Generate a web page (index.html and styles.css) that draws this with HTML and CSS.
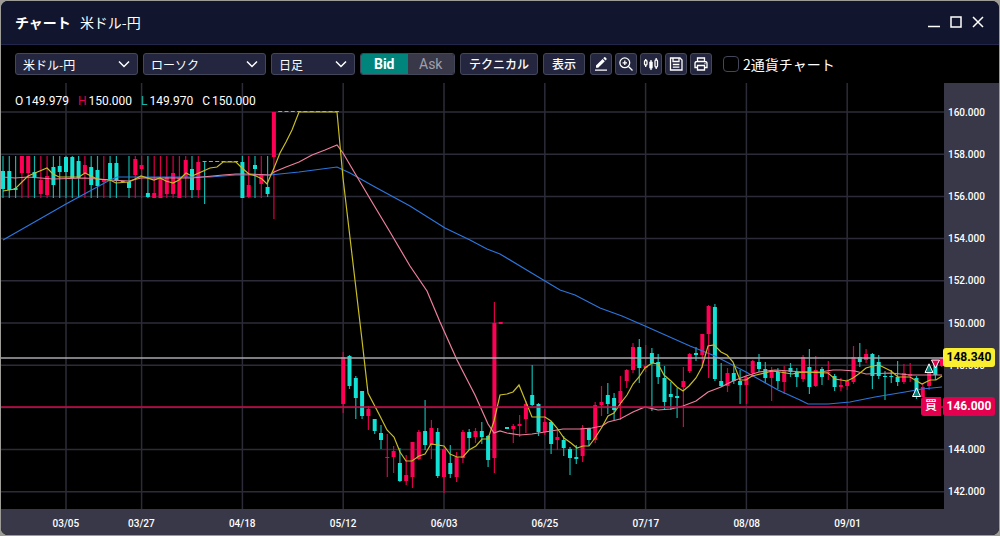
FILE: index.html
```html
<!doctype html>
<html lang="ja">
<head>
	<meta charset="utf-8">
	<title>チャート 米ドル-円</title>
	<link rel="stylesheet" href="styles.css">
</head>
<body>
<div class="window">
	<header class="titlebar">
		<h1 class="title">チャート</h1>
		<span class="pair">米ドル-円</span>
		<div class="win-controls">
			<button type="button" aria-label="最小化"><svg viewBox="0 0 12 12"><path d="M0 10.5h12"/></svg></button>
			<button type="button" aria-label="最大化"><svg viewBox="0 0 12 12"><path d="M1 1h10v10H1z"/></svg></button>
			<button type="button" aria-label="閉じる"><svg viewBox="0 0 12 12"><path d="M1 1l10 10M11 1L1 11"/></svg></button>
		</div>
	</header>

	<div class="toolbar">
		<div class="select">
			<select aria-label="通貨ペア"><option>米ドル-円</option></select>
			<svg viewBox="0 0 12 12"><path d="M1 3.5l5 5 5-5"/></svg>
		</div>
		<div class="select">
			<select aria-label="チャート種類"><option>ローソク</option></select>
			<svg viewBox="0 0 12 12"><path d="M1 3.5l5 5 5-5"/></svg>
		</div>
		<div class="select select-short">
			<select aria-label="足種"><option>日足</option></select>
			<svg viewBox="0 0 12 12"><path d="M1 3.5l5 5 5-5"/></svg>
		</div>
		<div class="toggle">
			<button type="button" class="cur">Bid</button>
			<button type="button">Ask</button>
		</div>
		<button type="button" class="btn">テクニカル</button>
		<button type="button" class="btn">表示</button>
		<div class="icons">
			<button type="button" class="icon" aria-label="描画">
				<svg viewBox="0 0 16 16"><path class="fill" d="M3 9.6L9.6 3l2.2 2.2L5.2 11.8H3zM10.3 2.3l1-1q.5-.4 1 0l1.200 1.200q.4.500 0 1l-1 1z"/><path d="M2 14.200h12"/></svg>
			</button>
			<button type="button" class="icon" aria-label="拡大">
				<svg viewBox="0 0 16 16"><circle cx="6.800" cy="6.800" r="4.900"/><path d="M10.500 10.500L14.500 14.500M4.600 6.800h4.400M6.800 4.600V9"/></svg>
			</button>
			<button type="button" class="icon" aria-label="ローソク足">
				<svg viewBox="0 0 16 16"><rect x="1.500" y="4.500" width="2.500" height="4.500" rx="1"/><path d="M2.700 3v1.500M2.700 9v2M8 4v10M13.200 2v2M13.200 11v2"/><rect class="fill" x="6.300" y="5.500" width="3.400" height="7" rx="1"/><rect x="12" y="4" width="2.500" height="7" rx="1"/></svg>
			</button>
			<button type="button" class="icon" aria-label="保存">
				<svg viewBox="0 0 16 16"><path d="M2.500 2h9.500l2 2v10H2.500zM5 2v3.500h6V2M4.800 8.500h6.600M4.800 11.200h6.600"/></svg>
			</button>
			<button type="button" class="icon" aria-label="印刷">
				<svg viewBox="0 0 16 16"><path d="M4.500 5.500V2h7v3.500M4.500 11.500H2v-4q0-2 2-2h8q2 0 2 2v4h-2.500M4.500 9.500h7V14h-7z"/><path d="M11.500 7.500h1"/></svg>
			</button>
		</div>
		<label class="check"><input type="checkbox">2通貨チャート</label>
	</div>

	<main class="chart">
		<div class="plot">
			<svg id="plot" viewBox="1 83 943 426" preserveAspectRatio="none" role="img" aria-label="米ドル-円 日足チャート">
				<g id="grid" class="grid"></g>
				<g id="candles"></g>
				<polyline id="ma-long" class="ma ma-long"/>
				<polyline id="ma-mid" class="ma ma-mid"/>
				<polyline id="ma-short" class="ma ma-short"/>
				<path class="line-now" d="M1 358H944"/>
				<path class="line-order" d="M1 407H944"/>
				<path class="mark buy" d="M929 364l4 8.500h-8z"/>
				<path class="mark buy" d="M916.500 388l4 8.500h-8z"/>
				<path class="mark sell" d="M935.500 368l-4-8h8z"/>
			</svg>
			<ul class="ohlc">
				<li><span>O</span>149.979</li>
				<li><span class="high">H</span>150.000</li>
				<li><span class="low">L</span>149.970</li>
				<li><span>C</span>150.000</li>
			</ul>
		</div>
		<ul class="prices">
			<li>160.000</li>
			<li>158.000</li>
			<li>156.000</li>
			<li>154.000</li>
			<li>152.000</li>
			<li>150.000</li>
			<li>148.000</li>
			<li></li>
			<li>144.000</li>
			<li>142.000</li>
		</ul>
		<ul class="dates">
			<li>03/05</li>
			<li>03/27</li>
			<li>04/18</li>
			<li>05/12</li>
			<li>06/03</li>
			<li>06/25</li>
			<li>07/17</li>
			<li>08/08</li>
			<li>09/01</li>
		</ul>
		<div class="tag tag-now"><b>148.340</b></div>
		<div class="tag tag-order"><span>買</span><b>146.000</b></div>
	</main>
</div>
<script src="chart.js"></script>
</body>
</html>
```

FILE: styles.css
```css
*{box-sizing:border-box;margin:0;padding:0;}
body{padding:1px;background:#9d9c96;color:#fff;font-family:"Noto Sans CJK JP",sans-serif;font-size:12px;}
ul{list-style:none;}
button,select{font:inherit;color:inherit;cursor:pointer;}
svg{display:block;fill:none;stroke:#fff;stroke-width:1.5;}

.window{display:flex;flex-direction:column;height:calc(100vh - 2px);min-height:360px;background:#000;border-radius:7px;overflow:hidden;}

.titlebar{display:flex;align-items:center;gap:9px;height:44px;padding:0 15px 2px 14px;background:#11152d;border-bottom:1px solid #23264a;font-size:14px;}
.title{font-size:14px;font-weight:700;}
.win-controls{display:flex;gap:10px;margin-left:auto;}
.win-controls button{width:12px;height:12px;border:0;background:none;}

.toolbar{display:flex;align-items:center;gap:5px;height:38px;padding:0 14px;white-space:nowrap;}
.select{display:grid;align-items:center;width:123px;}
.select-short{width:84px;}
.select select,.select svg{grid-area:1/1;}
.select select{appearance:none;height:22px;padding:0 7px;background:#24263f;border:1px solid #44465a;border-radius:3px;}
.select svg{justify-self:end;width:12px;height:12px;margin-right:8px;pointer-events:none;}
.toggle{display:flex;width:95px;height:22px;border:1px solid #44465a;border-radius:3px;overflow:hidden;font-family:Roboto,sans-serif;font-size:14px;}
.toggle button{flex:1;border:0;background:#383848;color:#a0a0ac;}
.toggle .cur{background:#00857c;color:#fff;font-weight:700;}
.btn,.icon{height:22px;background:#24263f;border:1px solid #44465a;border-radius:3px;}
.btn{padding:0 8px;font-weight:500;line-height:18px;}
.icons{display:flex;gap:3px;}
.icon{display:flex;align-items:center;justify-content:center;width:22px;}
.icon svg{width:16px;height:16px;stroke-width:1.3;}
.icon .fill{fill:#fff;stroke:none;}
.check{display:flex;align-items:center;gap:4px;margin-left:6px;font-size:14px;}
.check input{appearance:none;width:16px;height:16px;border:1px solid #44465a;border-radius:4px;}

.chart{position:relative;flex:1;display:grid;grid-template:minmax(0,1fr) 26px/minmax(0,1fr) 55px;font-family:Roboto,"Noto Sans CJK JP",sans-serif;}
.plot{display:grid;min-height:0;}
.plot svg,.ohlc{grid-area:1/1;}
.plot svg{width:100%;height:100%;min-height:0;}
.ohlc{display:flex;gap:9px;align-self:start;z-index:1;padding:11px 14px;line-height:14px;}
.ohlc span{margin-right:2px;}
.ohlc .high{color:#e0004d;}
.ohlc .low{color:#16b5ad;}

.prices,.dates{background:#383848;font-size:10px;font-weight:500;}
.prices{grid-area:1/2/3/3;display:grid;grid-template-rows:repeat(10,1fr);align-items:center;padding:8px 0 22px 4px;}
.dates{display:grid;grid-template-columns:40fr 50fr repeat(8,101fr) 46fr;align-items:center;padding-top:2px;text-align:center;}
.dates li:first-child{grid-column:2;}

.grid{stroke:#2c2c38;}
.wick{stroke-width:1.2;}
.body{stroke-width:4;}
.up{stroke:#ff0055;}
.down{stroke:#12e2d6;}
.wick.up{stroke:#d8004a;}
.wick.down{stroke:#10b4ac;}
.ma{stroke-width:1.2;}
.ma-short{stroke:#c8bd22;}
.ma-mid{stroke:#ee7f9c;}
.ma-long{stroke:#2b76de;}
.line-now{stroke:#a8a8ae;stroke-width:1.3;}
.line-order{stroke:#c80b47;stroke-width:1.5;}
.mark{stroke-width:1;}
.buy{fill:#00857c;}
.sell{fill:#e5004f;}

.tag{position:absolute;right:4px;display:flex;gap:2px;height:19px;line-height:19px;text-align:center;}
.tag b{width:52px;border-radius:3px;}
.tag span{width:20px;border-radius:3px 0 0 3px;font-weight:500;}
.tag-now{top:61%;margin-top:-11px;color:#000;}
.tag-now b{background:#f9ee30;}
.tag-order{top:71%;margin-top:-7px;}
.tag-order b,.tag-order span{background:#e5004f;}
```

FILE: chart.js
```js
var svg = document.getElementById('plot');
var NS = 'http://www.w3.org/2000/svg';
var START = 3, STEP = 6.3;

// [方向, 高値, 実体上, 実体下, 安値]  u:陽線 d:陰線
var candles = [
	['d',156,171,189,198],['d',156,171,190,198],['d',156,188,190,198],['u',156,156,173,198],['u',156,156,173,198],
	['d',156,172,177,198],['u',156,180,194,198],['u',156,176,195,198],['d',156,167,185,198],['d',156,166,172,198],
	['d',156,157,172,198],['d',156,157,178,198],['d',156,161,178,198],['u',156,165,173,198],['d',156,167,185,198],
	['d',156,170,186,198],['u',156,180,182,198],['d',156,163,179,198],['d',156,163,181,198],['d',181,181,182,182],
	['d',156,182,188,198],['u',156,159,175,198],['u',156,165,169,198],['d',156,193,197,198],['u',156,193,198,198],
	['u',156,179,198,198],['u',156,177,194,198],['u',156,173,194,198],['u',156,178,198,198],['u',156,160,177,198],
	['d',156,169,190,198],['u',156,162,190,198],['d',161,161,162,204],['d',161,161,162,162],['d',161,161,162,162],
	['d',161,161,162,162],['d',161,161,162,162],['d',161,161,162,162],['d',156,162,198,198],['u',156,185,197,198],
	['d',156,165,169,198],['u',156,174,184,198],['d',156,187,194,197],['u',112,112,157,219],['d',111,111,112,112],
	['d',111,111,112,112],['d',111,111,112,112],['d',111,111,112,112],['d',111,111,112,112],['d',111,111,112,112],
	['d',111,111,112,112],['d',111,111,112,112],['d',111,111,112,112],['d',111,111,112,112],['u',352,357,404,413],
	['d',355,356,386,389],['d',376,378,398,419],['d',391,391,416,419],['u',406,409,416,430],['d',419,419,431,434],
	['d',425,433,440,449],['u',434,457,458,477],['u',446,451,457,473],['d',448,463,481,482],['u',455,475,481,485],
	['u',442,442,477,488],['u',430,432,459,460],['d',400,431,445,450],['u',420,428,445,459],['d',428,432,476,478],
	['u',447,449,477,493],['d',445,463,474,478],['u',452,457,477,482],['u',430,432,458,463],['d',429,432,438,450],
	['u',428,431,437,443],['d',422,431,437,444],['d',435,436,460,467],['u',302,323,458,473],['u',322,322,324,324],
	['d',427,427,429,429],['u',424,426,429,443],['u',415,424,426,437],['u',401,404,419,433],['d',365,395,405,406],
	['d',403,404,432,436],['u',409,422,432,435],['d',421,422,444,454],['u',429,437,440,450],['d',436,440,448,456],
	['d',447,449,458,475],['d',445,457,459,464],['u',425,428,456,462],['d',428,428,440,446],['u',402,405,440,443],
	['u',386,402,405,416],['d',383,395,404,414],['d',393,398,410,420],['u',376,391,403,420],['u',369,370,381,388],
	['u',343,347,370,373],['d',339,347,368,383],['u',345,366,368,372],['d',348,353,363,411],['d',354,362,377,384],
	['d',366,378,402,409],['d',382,394,397,410],['d',388,396,398,418],['u',367,381,387,427],['u',353,354,371,373],
	['d',347,353,355,361],['u',334,334,355,368],['u',305,306,334,378],['d',304,307,379,381],['d',363,381,386,387],
	['u',368,373,386,392],['d',364,373,381,384],['d',370,381,385,404],['u',375,377,385,404],['u',360,361,373,377],
	['d',354,362,369,372],['d',362,369,378,383],['u',367,371,378,401],['d',368,372,381,389],['u',366,371,382,394],
	['d',363,368,372,377],['d',368,372,377,387],['u',355,357,379,382],['d',349,367,387,394],['u',356,370,386,387],
	['d',367,369,377,385],['u',361,372,373,380],['d',374,376,387,391],['u',378,385,387,391],['u',379,381,386,390],
	['u',346,357,382,384],['d',343,357,362,367],['u',349,354,360,363],['d',353,354,376,389],['d',355,362,376,379],
	['d',371,376,377,400],['d',370,376,377,383],['d',361,377,382,386],['u',364,373,382,384],['u',363,374,376,382],
	['d',376,378,395,399],['u',384,387,397,397],['u',363,372,386,390],['d',361,363,375,380],['u',357,357,366,367]
];

// 移動平均線
var averages = {
	'ma-short': '3,191 15,189 28,176 35,173 47,168 53,174 59,177 79,177 85,173 97,179 110,180 116,183 129,182 135,179 141,176 154,180 160,178 166,181 173,183 179,180 186,173 192,176 210,168 217,167 223,162 236,162 242,168 249,174 256,176 262,179 267,184 274,168 280,153 286,142 292,130 299,112 337,112 343,178 362,340 368,393 381,418 387,430 394,437 400,452 406,461 412,461 419,456 425,454 431,444 444,446 450,454 457,457 463,457 469,450 476,446 482,439 488,439 494,421 500,395 507,394 513,392 519,385 532,417 545,417 551,421 557,428 564,438 571,443 577,448 583,446 589,446 595,438 602,427 608,416 614,413 620,404 627,395 633,384 639,377 645,368 652,363 658,364 664,375 671,381 677,387 683,391 689,386 696,378 702,367 708,346 714,345 721,352 727,355 733,362 740,380 746,380 752,376 765,373 772,371 780,372 792,374 803,372 828,373 835,379 847,381 853,378 860,373 866,368 873,366 879,365 891,371 898,377 910,377 915,380 922,384 930,380 936,380 942,376',
	'ma-mid': '3,177 15,178 28,177 53,179 85,178 110,180 129,181 141,178 192,178 223,175 236,174 249,174 270,175 274,172 286,167 299,162 312,155 325,150 337,145 343,153 353,170 372,202 390,232 410,266 427,291 440,322 457,360 475,395 488,424 494,433 500,431 507,433 520,435 532,434 545,432 563,429 580,429 592,428 602,426 608,422 620,419 633,412 645,407 658,410 671,409 683,406 696,401 708,392 721,387 733,381 746,376 759,372 775,370 790,371 802,372 820,372 833,370 841,370 855,371 866,374 891,373 910,375 942,375',
	'ma-long': '3,240 66,204 110,180 117,177 210,177 236,175 270,175 299,172 337,167 350,173 375,187 410,206 445,228 470,240 487,249 500,254 530,272 560,290 575,295 600,308 622,316 645,326 690,346 715,356 746,372 778,390 800,400 808,404 828,404 850,402 875,397 905,392 922,389 942,387'
};

function line(parent, cls, x1, y1, x2, y2) {
	var el = document.createElementNS(NS, 'line');
	el.setAttribute('class', cls);
	el.setAttribute('x1', x1);
	el.setAttribute('y1', y1);
	el.setAttribute('x2', x2);
	el.setAttribute('y2', y2);
	parent.appendChild(el);
}

var grid = document.getElementById('grid');
for (var i = 0; i < 10; i++) {
	line(grid, '', 1, 112 + i * 42.2, 944, 112 + i * 42.2);
}
[10, 22, 38, 54, 70, 86, 102, 118, 134].forEach(function (n) {
	line(grid, '', START + n * STEP, 83, START + n * STEP, 509);
});

var group = document.getElementById('candles');
candles.forEach(function (c, n) {
	var x = START + n * STEP;
	var dir = c[0] == 'u' ? 'up' : 'down';
	line(group, 'wick ' + dir, x, c[1], x, c[4]);
	line(group, 'body ' + dir, x, c[2], x, c[3]);
});

for (var id in averages) {
	document.getElementById(id).setAttribute('points', averages[id]);
}
```
